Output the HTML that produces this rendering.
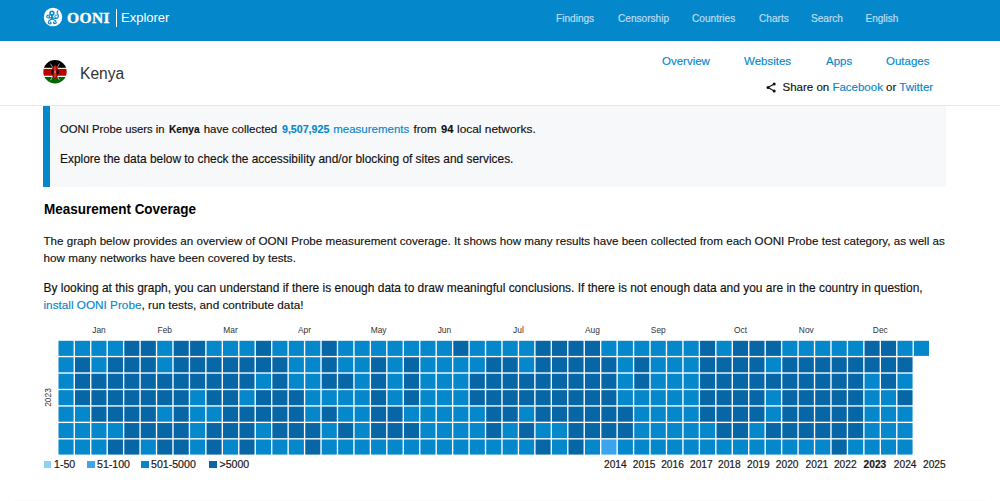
<!DOCTYPE html>
<html><head><meta charset="utf-8">
<style>
*{box-sizing:border-box;margin:0;padding:0}
html,body{width:1000px;height:501px;overflow:hidden;background:#fff;font-family:"Liberation Sans",sans-serif;color:#000}
.abs{position:absolute;white-space:nowrap}
#hdr{position:absolute;left:0;top:0;width:1000px;height:41px;background:#0588cb}
.nav{color:#bcdcf1;font-size:10.1px;top:13px;-webkit-text-stroke-width:0.2px}
#sub{position:absolute;left:0;top:41px;width:1000px;height:65px;background:#fff;border-bottom:1px solid #e6e8eb}
.tab{color:#0588cb;font-size:11.5px;top:55px;-webkit-text-stroke-width:0.15px}
#box{position:absolute;left:43px;top:106px;width:903.3px;height:81px;background:#f7f8fa;border-left:7.5px solid #0588cb}
.p{font-size:11.6px;color:#111;-webkit-text-stroke-width:0.15px}
.lk{color:#0588cb}
b{font-weight:bold}
.leg{font-size:10.6px;top:458px;color:#1a1a1a;-webkit-text-stroke-width:0.2px}
.yr{font-size:10.2px;top:458.8px;color:#1a1a1a;-webkit-text-stroke-width:0.2px}
</style></head><body>
<div id="hdr"></div>
<svg class="abs" style="left:42px;top:6px" width="22" height="23" viewBox="42 6 22 23">
<circle cx="53" cy="17.1" r="9.25" fill="#fff"/>
<g fill="none" stroke="#0588cb" stroke-linecap="round" stroke-linejoin="round">
<circle cx="51.95" cy="13.15" r="1.85" stroke-width="1.7"/>
<path d="M52,15.2 L52,19.2" stroke-width="1.7"/>
<path d="M51.4,17.6 C50.2,17.9 48.2,18.2 47.2,17.4 C46.3,16.6 46.9,15 48.3,15 C49.4,15 49.8,16 49.2,16.6" stroke-width="1.2"/>
<path d="M52.6,17.4 C53.6,18.2 55,18.6 56.4,18.4 C58,18.1 58.6,16.6 58.2,15.2 C57.8,13.9 56.8,13.2 57.2,11.9 C57.4,11.4 57.6,11.2 57.9,11" stroke-width="1.2"/>
<path d="M55.8,18.2 C55,17.6 54.6,16.4 55.2,15.4 C55.6,14.8 56.6,14.7 57,15.4" stroke-width="1"/>
<path d="M51.6,19 C50.4,19.6 48.4,20.6 48.4,22.2 C48.4,23.6 49.8,24.4 50.8,23.6 C51.4,23 51,22 50.4,22" stroke-width="1.2"/>
<path d="M52.4,19 C53.6,19.6 56.2,20.4 56.2,22.2 C56.2,23.6 54.8,24 53.9,23.3 C53.2,22.7 53.6,21.8 54.2,21.8" stroke-width="1.2"/>
</g>
<circle cx="51.9" cy="12.9" r="0.75" fill="#fff"/>
</svg>
<div class="abs" style="left:67px;top:9px;font-family:'Liberation Serif',serif;font-weight:bold;font-size:15.5px;color:#fff;letter-spacing:0.4px;-webkit-text-stroke:0.35px #fff">OONI</div>
<div class="abs" style="left:115.6px;top:9.2px;width:1.2px;height:17.8px;background:#fff"></div>
<div class="abs" style="left:121px;top:10px;font-size:13px;color:#fff">Explorer</div>
<div class="abs nav" style="left:556px">Findings</div>
<div class="abs nav" style="left:618px">Censorship</div>
<div class="abs nav" style="left:692px">Countries</div>
<div class="abs nav" style="left:759px">Charts</div>
<div class="abs nav" style="left:811px">Search</div>
<div class="abs nav" style="left:865.5px;top:12.5px;font-size:10px">English</div>

<div id="sub"></div>
<svg class="abs" style="left:42px;top:59px" width="26" height="26" viewBox="42 59 26 26">
<defs><clipPath id="fc"><circle cx="55" cy="71.8" r="11.7"/></clipPath></defs>
<g clip-path="url(#fc)">
<rect x="42" y="59" width="26" height="9" fill="#000"/>
<rect x="42" y="67.8" width="26" height="1.2" fill="#fff"/>
<rect x="42" y="68.9" width="26" height="7" fill="#bb0000"/>
<rect x="42" y="75.8" width="26" height="1.2" fill="#fff"/>
<rect x="42" y="77" width="26" height="8" fill="#006600"/>
<g stroke="#fff" stroke-width="0.6"><line x1="50.6" y1="63.6" x2="59.4" y2="80.2"/><line x1="59.4" y1="63.6" x2="50.6" y2="80.2"/></g>
<ellipse cx="55" cy="72" rx="3.4" ry="6.8" fill="#bb0000"/>
<ellipse cx="52.4" cy="72" rx="1.4" ry="2.6" fill="#000"/>
<ellipse cx="57.6" cy="72" rx="1.4" ry="2.6" fill="#000"/>
<ellipse cx="55" cy="72" rx="1.5" ry="6.4" fill="#bb0000"/>
<line x1="55" y1="66.5" x2="55" y2="77.5" stroke="#fff" stroke-width="0.4"/>
<ellipse cx="55" cy="72" rx="0.5" ry="0.8" fill="#fff"/>
</g>
</svg>
<div class="abs" style="left:80px;top:65px;font-size:15.6px;color:#333">Kenya</div>
<div class="abs tab" style="left:662px">Overview</div>
<div class="abs tab" style="left:744px">Websites</div>
<div class="abs tab" style="left:826px">Apps</div>
<div class="abs tab" style="left:886px">Outages</div>
<svg class="abs" style="left:764px;top:80px" width="14" height="14" viewBox="764 80 14 14">
<g stroke="#111" stroke-width="1.1"><line x1="768" y1="87.4" x2="774.2" y2="84"/><line x1="768" y1="87.4" x2="774.2" y2="91"/></g>
<circle cx="768" cy="87.4" r="1.5" fill="#111"/><circle cx="774.2" cy="84" r="1.5" fill="#111"/><circle cx="774.2" cy="91" r="1.5" fill="#111"/>
</svg>
<div class="abs" style="left:782.5px;top:81px;font-size:11.5px;color:#111;-webkit-text-stroke-width:0.15px">Share on <span class="lk">Facebook</span> or <span class="lk">Twitter</span></div>

<div id="box"></div>
<div class="abs p " style="left:60px;top:123.2px;font-size:11.5px;transform:scaleX(0.98);transform-origin:0 0">OONI Probe users in</div>
<div class="abs p " style="left:168.6px;top:123.2px;font-size:11.5px;font-weight:bold;transform:scaleX(0.885);transform-origin:0 0">Kenya</div>
<div class="abs p " style="left:203.7px;top:123.2px;font-size:11.5px">have collected</div>
<div class="abs p lk" style="left:282px;top:123.2px;font-size:11.5px;font-weight:bold;transform:scaleX(0.925);transform-origin:0 0">9,507,925</div>
<div class="abs p lk" style="left:333.2px;top:123.2px;font-size:11.5px">measurements</div>
<div class="abs p " style="left:413.5px;top:123.2px;font-size:11.5px">from</div>
<div class="abs p " style="left:440.7px;top:123.2px;font-size:11.5px;font-weight:bold;transform:scaleX(0.97);transform-origin:0 0">94</div>
<div class="abs p " style="left:457px;top:123.2px;font-size:11.5px;transform:scaleX(1.035);transform-origin:0 0">local networks.</div>

<div class="abs p" style="left:60px;top:151.8px;font-size:11.9px">Explore the data below to check the accessibility and/or blocking of sites and services.</div>

<div class="abs" style="left:43.5px;top:200.6px;font-size:14.2px;font-weight:bold;color:#000;transform:scaleX(0.95);transform-origin:0 0">Measurement Coverage</div>
<div class="abs p" style="left:43.5px;top:234px;font-size:11.62px">The graph below provides an overview of OONI Probe measurement coverage. It shows how many results have been collected from each OONI Probe test category, as well as</div>
<div class="abs p" style="left:43.5px;top:251.3px;font-size:11.68px">how many networks have been covered by tests.</div>
<div class="abs p" style="left:43.5px;top:280.8px;font-size:11.96px">By looking at this graph, you can understand if there is enough data to draw meaningful conclusions. If there is not enough data and you are in the country in question,</div>
<div class="abs p" style="left:43.5px;top:297.8px;font-size:11.75px"><span class="lk">install OONI Probe</span>, run tests, and contribute data!</div>

<svg class="abs" style="left:0;top:0" width="1000" height="501" viewBox="0 0 1000 501"><g font-family="Liberation Sans" font-size="8.4" fill="#333"><text x="98.95" y="332.7" text-anchor="middle">Jan</text><text x="164.75" y="332.7" text-anchor="middle">Feb</text><text x="230.55" y="332.7" text-anchor="middle">Mar</text><text x="304.57" y="332.7" text-anchor="middle">Apr</text><text x="378.60" y="332.7" text-anchor="middle">May</text><text x="444.40" y="332.7" text-anchor="middle">Jun</text><text x="518.42" y="332.7" text-anchor="middle">Jul</text><text x="592.45" y="332.7" text-anchor="middle">Aug</text><text x="658.25" y="332.7" text-anchor="middle">Sep</text><text x="740.50" y="332.7" text-anchor="middle">Oct</text><text x="806.30" y="332.7" text-anchor="middle">Nov</text><text x="880.32" y="332.7" text-anchor="middle">Dec</text><text transform="translate(51,397.5) rotate(-90)" text-anchor="middle">2023</text></g><rect x="58.50" y="340.80" width="15.1" height="15.1" fill="#0588cb"/><rect x="74.95" y="340.80" width="15.1" height="15.1" fill="#0588cb"/><rect x="91.40" y="340.80" width="15.1" height="15.1" fill="#0588cb"/><rect x="107.85" y="340.80" width="15.1" height="15.1" fill="#0588cb"/><rect x="124.30" y="340.80" width="15.1" height="15.1" fill="#0767a6"/><rect x="140.75" y="340.80" width="15.1" height="15.1" fill="#0767a6"/><rect x="157.20" y="340.80" width="15.1" height="15.1" fill="#0588cb"/><rect x="173.65" y="340.80" width="15.1" height="15.1" fill="#0767a6"/><rect x="190.10" y="340.80" width="15.1" height="15.1" fill="#0767a6"/><rect x="206.55" y="340.80" width="15.1" height="15.1" fill="#0588cb"/><rect x="223.00" y="340.80" width="15.1" height="15.1" fill="#0588cb"/><rect x="239.45" y="340.80" width="15.1" height="15.1" fill="#0588cb"/><rect x="255.90" y="340.80" width="15.1" height="15.1" fill="#0767a6"/><rect x="272.35" y="340.80" width="15.1" height="15.1" fill="#0588cb"/><rect x="288.80" y="340.80" width="15.1" height="15.1" fill="#0588cb"/><rect x="305.25" y="340.80" width="15.1" height="15.1" fill="#0588cb"/><rect x="321.70" y="340.80" width="15.1" height="15.1" fill="#0767a6"/><rect x="338.15" y="340.80" width="15.1" height="15.1" fill="#0588cb"/><rect x="354.60" y="340.80" width="15.1" height="15.1" fill="#0588cb"/><rect x="371.05" y="340.80" width="15.1" height="15.1" fill="#0588cb"/><rect x="387.50" y="340.80" width="15.1" height="15.1" fill="#0588cb"/><rect x="403.95" y="340.80" width="15.1" height="15.1" fill="#0588cb"/><rect x="420.40" y="340.80" width="15.1" height="15.1" fill="#0588cb"/><rect x="436.85" y="340.80" width="15.1" height="15.1" fill="#0588cb"/><rect x="453.30" y="340.80" width="15.1" height="15.1" fill="#0767a6"/><rect x="469.75" y="340.80" width="15.1" height="15.1" fill="#0588cb"/><rect x="486.20" y="340.80" width="15.1" height="15.1" fill="#0588cb"/><rect x="502.65" y="340.80" width="15.1" height="15.1" fill="#0588cb"/><rect x="519.10" y="340.80" width="15.1" height="15.1" fill="#0588cb"/><rect x="535.55" y="340.80" width="15.1" height="15.1" fill="#0767a6"/><rect x="552.00" y="340.80" width="15.1" height="15.1" fill="#0767a6"/><rect x="568.45" y="340.80" width="15.1" height="15.1" fill="#0767a6"/><rect x="584.90" y="340.80" width="15.1" height="15.1" fill="#0767a6"/><rect x="601.35" y="340.80" width="15.1" height="15.1" fill="#0588cb"/><rect x="617.80" y="340.80" width="15.1" height="15.1" fill="#0588cb"/><rect x="634.25" y="340.80" width="15.1" height="15.1" fill="#0588cb"/><rect x="650.70" y="340.80" width="15.1" height="15.1" fill="#0588cb"/><rect x="667.15" y="340.80" width="15.1" height="15.1" fill="#0588cb"/><rect x="683.60" y="340.80" width="15.1" height="15.1" fill="#0588cb"/><rect x="700.05" y="340.80" width="15.1" height="15.1" fill="#0767a6"/><rect x="716.50" y="340.80" width="15.1" height="15.1" fill="#0588cb"/><rect x="732.95" y="340.80" width="15.1" height="15.1" fill="#0767a6"/><rect x="749.40" y="340.80" width="15.1" height="15.1" fill="#0767a6"/><rect x="765.85" y="340.80" width="15.1" height="15.1" fill="#0767a6"/><rect x="782.30" y="340.80" width="15.1" height="15.1" fill="#0588cb"/><rect x="798.75" y="340.80" width="15.1" height="15.1" fill="#0588cb"/><rect x="815.20" y="340.80" width="15.1" height="15.1" fill="#0588cb"/><rect x="831.65" y="340.80" width="15.1" height="15.1" fill="#0588cb"/><rect x="848.10" y="340.80" width="15.1" height="15.1" fill="#0588cb"/><rect x="864.55" y="340.80" width="15.1" height="15.1" fill="#0767a6"/><rect x="881.00" y="340.80" width="15.1" height="15.1" fill="#0767a6"/><rect x="897.45" y="340.80" width="15.1" height="15.1" fill="#0588cb"/><rect x="913.90" y="340.80" width="15.1" height="15.1" fill="#0588cb"/><rect x="58.50" y="357.25" width="15.1" height="15.1" fill="#0588cb"/><rect x="74.95" y="357.25" width="15.1" height="15.1" fill="#0767a6"/><rect x="91.40" y="357.25" width="15.1" height="15.1" fill="#0588cb"/><rect x="107.85" y="357.25" width="15.1" height="15.1" fill="#0767a6"/><rect x="124.30" y="357.25" width="15.1" height="15.1" fill="#0767a6"/><rect x="140.75" y="357.25" width="15.1" height="15.1" fill="#0767a6"/><rect x="157.20" y="357.25" width="15.1" height="15.1" fill="#0588cb"/><rect x="173.65" y="357.25" width="15.1" height="15.1" fill="#0767a6"/><rect x="190.10" y="357.25" width="15.1" height="15.1" fill="#0767a6"/><rect x="206.55" y="357.25" width="15.1" height="15.1" fill="#0767a6"/><rect x="223.00" y="357.25" width="15.1" height="15.1" fill="#0767a6"/><rect x="239.45" y="357.25" width="15.1" height="15.1" fill="#0767a6"/><rect x="255.90" y="357.25" width="15.1" height="15.1" fill="#0767a6"/><rect x="272.35" y="357.25" width="15.1" height="15.1" fill="#0767a6"/><rect x="288.80" y="357.25" width="15.1" height="15.1" fill="#0588cb"/><rect x="305.25" y="357.25" width="15.1" height="15.1" fill="#0588cb"/><rect x="321.70" y="357.25" width="15.1" height="15.1" fill="#0767a6"/><rect x="338.15" y="357.25" width="15.1" height="15.1" fill="#0588cb"/><rect x="354.60" y="357.25" width="15.1" height="15.1" fill="#0588cb"/><rect x="371.05" y="357.25" width="15.1" height="15.1" fill="#0767a6"/><rect x="387.50" y="357.25" width="15.1" height="15.1" fill="#0588cb"/><rect x="403.95" y="357.25" width="15.1" height="15.1" fill="#0767a6"/><rect x="420.40" y="357.25" width="15.1" height="15.1" fill="#0588cb"/><rect x="436.85" y="357.25" width="15.1" height="15.1" fill="#0588cb"/><rect x="453.30" y="357.25" width="15.1" height="15.1" fill="#0588cb"/><rect x="469.75" y="357.25" width="15.1" height="15.1" fill="#0588cb"/><rect x="486.20" y="357.25" width="15.1" height="15.1" fill="#0767a6"/><rect x="502.65" y="357.25" width="15.1" height="15.1" fill="#0767a6"/><rect x="519.10" y="357.25" width="15.1" height="15.1" fill="#0588cb"/><rect x="535.55" y="357.25" width="15.1" height="15.1" fill="#0767a6"/><rect x="552.00" y="357.25" width="15.1" height="15.1" fill="#0767a6"/><rect x="568.45" y="357.25" width="15.1" height="15.1" fill="#0767a6"/><rect x="584.90" y="357.25" width="15.1" height="15.1" fill="#0767a6"/><rect x="601.35" y="357.25" width="15.1" height="15.1" fill="#0767a6"/><rect x="617.80" y="357.25" width="15.1" height="15.1" fill="#0588cb"/><rect x="634.25" y="357.25" width="15.1" height="15.1" fill="#0767a6"/><rect x="650.70" y="357.25" width="15.1" height="15.1" fill="#0588cb"/><rect x="667.15" y="357.25" width="15.1" height="15.1" fill="#0588cb"/><rect x="683.60" y="357.25" width="15.1" height="15.1" fill="#0588cb"/><rect x="700.05" y="357.25" width="15.1" height="15.1" fill="#0767a6"/><rect x="716.50" y="357.25" width="15.1" height="15.1" fill="#0767a6"/><rect x="732.95" y="357.25" width="15.1" height="15.1" fill="#0767a6"/><rect x="749.40" y="357.25" width="15.1" height="15.1" fill="#0767a6"/><rect x="765.85" y="357.25" width="15.1" height="15.1" fill="#0588cb"/><rect x="782.30" y="357.25" width="15.1" height="15.1" fill="#0767a6"/><rect x="798.75" y="357.25" width="15.1" height="15.1" fill="#0767a6"/><rect x="815.20" y="357.25" width="15.1" height="15.1" fill="#0767a6"/><rect x="831.65" y="357.25" width="15.1" height="15.1" fill="#0767a6"/><rect x="848.10" y="357.25" width="15.1" height="15.1" fill="#0767a6"/><rect x="864.55" y="357.25" width="15.1" height="15.1" fill="#0767a6"/><rect x="881.00" y="357.25" width="15.1" height="15.1" fill="#0767a6"/><rect x="897.45" y="357.25" width="15.1" height="15.1" fill="#0767a6"/><rect x="58.50" y="373.70" width="15.1" height="15.1" fill="#0588cb"/><rect x="74.95" y="373.70" width="15.1" height="15.1" fill="#0767a6"/><rect x="91.40" y="373.70" width="15.1" height="15.1" fill="#0767a6"/><rect x="107.85" y="373.70" width="15.1" height="15.1" fill="#0767a6"/><rect x="124.30" y="373.70" width="15.1" height="15.1" fill="#0767a6"/><rect x="140.75" y="373.70" width="15.1" height="15.1" fill="#0767a6"/><rect x="157.20" y="373.70" width="15.1" height="15.1" fill="#0767a6"/><rect x="173.65" y="373.70" width="15.1" height="15.1" fill="#0767a6"/><rect x="190.10" y="373.70" width="15.1" height="15.1" fill="#0767a6"/><rect x="206.55" y="373.70" width="15.1" height="15.1" fill="#0767a6"/><rect x="223.00" y="373.70" width="15.1" height="15.1" fill="#0767a6"/><rect x="239.45" y="373.70" width="15.1" height="15.1" fill="#0767a6"/><rect x="255.90" y="373.70" width="15.1" height="15.1" fill="#0588cb"/><rect x="272.35" y="373.70" width="15.1" height="15.1" fill="#0767a6"/><rect x="288.80" y="373.70" width="15.1" height="15.1" fill="#0588cb"/><rect x="305.25" y="373.70" width="15.1" height="15.1" fill="#0588cb"/><rect x="321.70" y="373.70" width="15.1" height="15.1" fill="#0767a6"/><rect x="338.15" y="373.70" width="15.1" height="15.1" fill="#0767a6"/><rect x="354.60" y="373.70" width="15.1" height="15.1" fill="#0588cb"/><rect x="371.05" y="373.70" width="15.1" height="15.1" fill="#0767a6"/><rect x="387.50" y="373.70" width="15.1" height="15.1" fill="#0588cb"/><rect x="403.95" y="373.70" width="15.1" height="15.1" fill="#0767a6"/><rect x="420.40" y="373.70" width="15.1" height="15.1" fill="#0588cb"/><rect x="436.85" y="373.70" width="15.1" height="15.1" fill="#0588cb"/><rect x="453.30" y="373.70" width="15.1" height="15.1" fill="#0588cb"/><rect x="469.75" y="373.70" width="15.1" height="15.1" fill="#0767a6"/><rect x="486.20" y="373.70" width="15.1" height="15.1" fill="#0767a6"/><rect x="502.65" y="373.70" width="15.1" height="15.1" fill="#0767a6"/><rect x="519.10" y="373.70" width="15.1" height="15.1" fill="#0767a6"/><rect x="535.55" y="373.70" width="15.1" height="15.1" fill="#0767a6"/><rect x="552.00" y="373.70" width="15.1" height="15.1" fill="#0767a6"/><rect x="568.45" y="373.70" width="15.1" height="15.1" fill="#0767a6"/><rect x="584.90" y="373.70" width="15.1" height="15.1" fill="#0767a6"/><rect x="601.35" y="373.70" width="15.1" height="15.1" fill="#0767a6"/><rect x="617.80" y="373.70" width="15.1" height="15.1" fill="#0588cb"/><rect x="634.25" y="373.70" width="15.1" height="15.1" fill="#0767a6"/><rect x="650.70" y="373.70" width="15.1" height="15.1" fill="#0588cb"/><rect x="667.15" y="373.70" width="15.1" height="15.1" fill="#0588cb"/><rect x="683.60" y="373.70" width="15.1" height="15.1" fill="#0588cb"/><rect x="700.05" y="373.70" width="15.1" height="15.1" fill="#0767a6"/><rect x="716.50" y="373.70" width="15.1" height="15.1" fill="#0767a6"/><rect x="732.95" y="373.70" width="15.1" height="15.1" fill="#0767a6"/><rect x="749.40" y="373.70" width="15.1" height="15.1" fill="#0767a6"/><rect x="765.85" y="373.70" width="15.1" height="15.1" fill="#0767a6"/><rect x="782.30" y="373.70" width="15.1" height="15.1" fill="#0767a6"/><rect x="798.75" y="373.70" width="15.1" height="15.1" fill="#0767a6"/><rect x="815.20" y="373.70" width="15.1" height="15.1" fill="#0767a6"/><rect x="831.65" y="373.70" width="15.1" height="15.1" fill="#0767a6"/><rect x="848.10" y="373.70" width="15.1" height="15.1" fill="#0767a6"/><rect x="864.55" y="373.70" width="15.1" height="15.1" fill="#0588cb"/><rect x="881.00" y="373.70" width="15.1" height="15.1" fill="#0767a6"/><rect x="897.45" y="373.70" width="15.1" height="15.1" fill="#0588cb"/><rect x="58.50" y="390.15" width="15.1" height="15.1" fill="#0588cb"/><rect x="74.95" y="390.15" width="15.1" height="15.1" fill="#0767a6"/><rect x="91.40" y="390.15" width="15.1" height="15.1" fill="#0767a6"/><rect x="107.85" y="390.15" width="15.1" height="15.1" fill="#0767a6"/><rect x="124.30" y="390.15" width="15.1" height="15.1" fill="#0767a6"/><rect x="140.75" y="390.15" width="15.1" height="15.1" fill="#0767a6"/><rect x="157.20" y="390.15" width="15.1" height="15.1" fill="#0767a6"/><rect x="173.65" y="390.15" width="15.1" height="15.1" fill="#0767a6"/><rect x="190.10" y="390.15" width="15.1" height="15.1" fill="#0588cb"/><rect x="206.55" y="390.15" width="15.1" height="15.1" fill="#0767a6"/><rect x="223.00" y="390.15" width="15.1" height="15.1" fill="#0767a6"/><rect x="239.45" y="390.15" width="15.1" height="15.1" fill="#0588cb"/><rect x="255.90" y="390.15" width="15.1" height="15.1" fill="#0767a6"/><rect x="272.35" y="390.15" width="15.1" height="15.1" fill="#0767a6"/><rect x="288.80" y="390.15" width="15.1" height="15.1" fill="#0767a6"/><rect x="305.25" y="390.15" width="15.1" height="15.1" fill="#0588cb"/><rect x="321.70" y="390.15" width="15.1" height="15.1" fill="#0588cb"/><rect x="338.15" y="390.15" width="15.1" height="15.1" fill="#0588cb"/><rect x="354.60" y="390.15" width="15.1" height="15.1" fill="#0588cb"/><rect x="371.05" y="390.15" width="15.1" height="15.1" fill="#0767a6"/><rect x="387.50" y="390.15" width="15.1" height="15.1" fill="#0588cb"/><rect x="403.95" y="390.15" width="15.1" height="15.1" fill="#0767a6"/><rect x="420.40" y="390.15" width="15.1" height="15.1" fill="#0588cb"/><rect x="436.85" y="390.15" width="15.1" height="15.1" fill="#0588cb"/><rect x="453.30" y="390.15" width="15.1" height="15.1" fill="#0588cb"/><rect x="469.75" y="390.15" width="15.1" height="15.1" fill="#0767a6"/><rect x="486.20" y="390.15" width="15.1" height="15.1" fill="#0767a6"/><rect x="502.65" y="390.15" width="15.1" height="15.1" fill="#0767a6"/><rect x="519.10" y="390.15" width="15.1" height="15.1" fill="#0767a6"/><rect x="535.55" y="390.15" width="15.1" height="15.1" fill="#0767a6"/><rect x="552.00" y="390.15" width="15.1" height="15.1" fill="#0767a6"/><rect x="568.45" y="390.15" width="15.1" height="15.1" fill="#0767a6"/><rect x="584.90" y="390.15" width="15.1" height="15.1" fill="#0767a6"/><rect x="601.35" y="390.15" width="15.1" height="15.1" fill="#0767a6"/><rect x="617.80" y="390.15" width="15.1" height="15.1" fill="#0588cb"/><rect x="634.25" y="390.15" width="15.1" height="15.1" fill="#0588cb"/><rect x="650.70" y="390.15" width="15.1" height="15.1" fill="#0588cb"/><rect x="667.15" y="390.15" width="15.1" height="15.1" fill="#0588cb"/><rect x="683.60" y="390.15" width="15.1" height="15.1" fill="#0588cb"/><rect x="700.05" y="390.15" width="15.1" height="15.1" fill="#0767a6"/><rect x="716.50" y="390.15" width="15.1" height="15.1" fill="#0767a6"/><rect x="732.95" y="390.15" width="15.1" height="15.1" fill="#0767a6"/><rect x="749.40" y="390.15" width="15.1" height="15.1" fill="#0767a6"/><rect x="765.85" y="390.15" width="15.1" height="15.1" fill="#0588cb"/><rect x="782.30" y="390.15" width="15.1" height="15.1" fill="#0767a6"/><rect x="798.75" y="390.15" width="15.1" height="15.1" fill="#0767a6"/><rect x="815.20" y="390.15" width="15.1" height="15.1" fill="#0767a6"/><rect x="831.65" y="390.15" width="15.1" height="15.1" fill="#0767a6"/><rect x="848.10" y="390.15" width="15.1" height="15.1" fill="#0767a6"/><rect x="864.55" y="390.15" width="15.1" height="15.1" fill="#0588cb"/><rect x="881.00" y="390.15" width="15.1" height="15.1" fill="#0588cb"/><rect x="897.45" y="390.15" width="15.1" height="15.1" fill="#0767a6"/><rect x="58.50" y="406.60" width="15.1" height="15.1" fill="#0588cb"/><rect x="74.95" y="406.60" width="15.1" height="15.1" fill="#0588cb"/><rect x="91.40" y="406.60" width="15.1" height="15.1" fill="#0767a6"/><rect x="107.85" y="406.60" width="15.1" height="15.1" fill="#0767a6"/><rect x="124.30" y="406.60" width="15.1" height="15.1" fill="#0767a6"/><rect x="140.75" y="406.60" width="15.1" height="15.1" fill="#0767a6"/><rect x="157.20" y="406.60" width="15.1" height="15.1" fill="#0588cb"/><rect x="173.65" y="406.60" width="15.1" height="15.1" fill="#0767a6"/><rect x="190.10" y="406.60" width="15.1" height="15.1" fill="#0588cb"/><rect x="206.55" y="406.60" width="15.1" height="15.1" fill="#0588cb"/><rect x="223.00" y="406.60" width="15.1" height="15.1" fill="#0767a6"/><rect x="239.45" y="406.60" width="15.1" height="15.1" fill="#0767a6"/><rect x="255.90" y="406.60" width="15.1" height="15.1" fill="#0767a6"/><rect x="272.35" y="406.60" width="15.1" height="15.1" fill="#0767a6"/><rect x="288.80" y="406.60" width="15.1" height="15.1" fill="#0767a6"/><rect x="305.25" y="406.60" width="15.1" height="15.1" fill="#0588cb"/><rect x="321.70" y="406.60" width="15.1" height="15.1" fill="#0767a6"/><rect x="338.15" y="406.60" width="15.1" height="15.1" fill="#0588cb"/><rect x="354.60" y="406.60" width="15.1" height="15.1" fill="#0588cb"/><rect x="371.05" y="406.60" width="15.1" height="15.1" fill="#0767a6"/><rect x="387.50" y="406.60" width="15.1" height="15.1" fill="#0767a6"/><rect x="403.95" y="406.60" width="15.1" height="15.1" fill="#0588cb"/><rect x="420.40" y="406.60" width="15.1" height="15.1" fill="#0588cb"/><rect x="436.85" y="406.60" width="15.1" height="15.1" fill="#0588cb"/><rect x="453.30" y="406.60" width="15.1" height="15.1" fill="#0588cb"/><rect x="469.75" y="406.60" width="15.1" height="15.1" fill="#0588cb"/><rect x="486.20" y="406.60" width="15.1" height="15.1" fill="#0767a6"/><rect x="502.65" y="406.60" width="15.1" height="15.1" fill="#0767a6"/><rect x="519.10" y="406.60" width="15.1" height="15.1" fill="#0588cb"/><rect x="535.55" y="406.60" width="15.1" height="15.1" fill="#0767a6"/><rect x="552.00" y="406.60" width="15.1" height="15.1" fill="#0767a6"/><rect x="568.45" y="406.60" width="15.1" height="15.1" fill="#0767a6"/><rect x="584.90" y="406.60" width="15.1" height="15.1" fill="#0767a6"/><rect x="601.35" y="406.60" width="15.1" height="15.1" fill="#0767a6"/><rect x="617.80" y="406.60" width="15.1" height="15.1" fill="#0767a6"/><rect x="634.25" y="406.60" width="15.1" height="15.1" fill="#0588cb"/><rect x="650.70" y="406.60" width="15.1" height="15.1" fill="#0588cb"/><rect x="667.15" y="406.60" width="15.1" height="15.1" fill="#0588cb"/><rect x="683.60" y="406.60" width="15.1" height="15.1" fill="#0588cb"/><rect x="700.05" y="406.60" width="15.1" height="15.1" fill="#0767a6"/><rect x="716.50" y="406.60" width="15.1" height="15.1" fill="#0767a6"/><rect x="732.95" y="406.60" width="15.1" height="15.1" fill="#0767a6"/><rect x="749.40" y="406.60" width="15.1" height="15.1" fill="#0767a6"/><rect x="765.85" y="406.60" width="15.1" height="15.1" fill="#0588cb"/><rect x="782.30" y="406.60" width="15.1" height="15.1" fill="#0767a6"/><rect x="798.75" y="406.60" width="15.1" height="15.1" fill="#0767a6"/><rect x="815.20" y="406.60" width="15.1" height="15.1" fill="#0767a6"/><rect x="831.65" y="406.60" width="15.1" height="15.1" fill="#0767a6"/><rect x="848.10" y="406.60" width="15.1" height="15.1" fill="#0767a6"/><rect x="864.55" y="406.60" width="15.1" height="15.1" fill="#0588cb"/><rect x="881.00" y="406.60" width="15.1" height="15.1" fill="#0588cb"/><rect x="897.45" y="406.60" width="15.1" height="15.1" fill="#0588cb"/><rect x="58.50" y="423.05" width="15.1" height="15.1" fill="#0588cb"/><rect x="74.95" y="423.05" width="15.1" height="15.1" fill="#0588cb"/><rect x="91.40" y="423.05" width="15.1" height="15.1" fill="#0588cb"/><rect x="107.85" y="423.05" width="15.1" height="15.1" fill="#0588cb"/><rect x="124.30" y="423.05" width="15.1" height="15.1" fill="#0767a6"/><rect x="140.75" y="423.05" width="15.1" height="15.1" fill="#0767a6"/><rect x="157.20" y="423.05" width="15.1" height="15.1" fill="#0767a6"/><rect x="173.65" y="423.05" width="15.1" height="15.1" fill="#0767a6"/><rect x="190.10" y="423.05" width="15.1" height="15.1" fill="#0588cb"/><rect x="206.55" y="423.05" width="15.1" height="15.1" fill="#0767a6"/><rect x="223.00" y="423.05" width="15.1" height="15.1" fill="#0767a6"/><rect x="239.45" y="423.05" width="15.1" height="15.1" fill="#0767a6"/><rect x="255.90" y="423.05" width="15.1" height="15.1" fill="#0588cb"/><rect x="272.35" y="423.05" width="15.1" height="15.1" fill="#0767a6"/><rect x="288.80" y="423.05" width="15.1" height="15.1" fill="#0767a6"/><rect x="305.25" y="423.05" width="15.1" height="15.1" fill="#0767a6"/><rect x="321.70" y="423.05" width="15.1" height="15.1" fill="#0588cb"/><rect x="338.15" y="423.05" width="15.1" height="15.1" fill="#0767a6"/><rect x="354.60" y="423.05" width="15.1" height="15.1" fill="#0588cb"/><rect x="371.05" y="423.05" width="15.1" height="15.1" fill="#0767a6"/><rect x="387.50" y="423.05" width="15.1" height="15.1" fill="#0767a6"/><rect x="403.95" y="423.05" width="15.1" height="15.1" fill="#0767a6"/><rect x="420.40" y="423.05" width="15.1" height="15.1" fill="#0588cb"/><rect x="436.85" y="423.05" width="15.1" height="15.1" fill="#0588cb"/><rect x="453.30" y="423.05" width="15.1" height="15.1" fill="#0588cb"/><rect x="469.75" y="423.05" width="15.1" height="15.1" fill="#0588cb"/><rect x="486.20" y="423.05" width="15.1" height="15.1" fill="#0767a6"/><rect x="502.65" y="423.05" width="15.1" height="15.1" fill="#0588cb"/><rect x="519.10" y="423.05" width="15.1" height="15.1" fill="#0767a6"/><rect x="535.55" y="423.05" width="15.1" height="15.1" fill="#0588cb"/><rect x="552.00" y="423.05" width="15.1" height="15.1" fill="#0588cb"/><rect x="568.45" y="423.05" width="15.1" height="15.1" fill="#0767a6"/><rect x="584.90" y="423.05" width="15.1" height="15.1" fill="#0767a6"/><rect x="601.35" y="423.05" width="15.1" height="15.1" fill="#0767a6"/><rect x="617.80" y="423.05" width="15.1" height="15.1" fill="#0767a6"/><rect x="634.25" y="423.05" width="15.1" height="15.1" fill="#0588cb"/><rect x="650.70" y="423.05" width="15.1" height="15.1" fill="#0588cb"/><rect x="667.15" y="423.05" width="15.1" height="15.1" fill="#0588cb"/><rect x="683.60" y="423.05" width="15.1" height="15.1" fill="#0588cb"/><rect x="700.05" y="423.05" width="15.1" height="15.1" fill="#0588cb"/><rect x="716.50" y="423.05" width="15.1" height="15.1" fill="#0767a6"/><rect x="732.95" y="423.05" width="15.1" height="15.1" fill="#0767a6"/><rect x="749.40" y="423.05" width="15.1" height="15.1" fill="#0588cb"/><rect x="765.85" y="423.05" width="15.1" height="15.1" fill="#0767a6"/><rect x="782.30" y="423.05" width="15.1" height="15.1" fill="#0767a6"/><rect x="798.75" y="423.05" width="15.1" height="15.1" fill="#0767a6"/><rect x="815.20" y="423.05" width="15.1" height="15.1" fill="#0767a6"/><rect x="831.65" y="423.05" width="15.1" height="15.1" fill="#0767a6"/><rect x="848.10" y="423.05" width="15.1" height="15.1" fill="#0767a6"/><rect x="864.55" y="423.05" width="15.1" height="15.1" fill="#0588cb"/><rect x="881.00" y="423.05" width="15.1" height="15.1" fill="#0588cb"/><rect x="897.45" y="423.05" width="15.1" height="15.1" fill="#0588cb"/><rect x="58.50" y="439.50" width="15.1" height="15.1" fill="#0588cb"/><rect x="74.95" y="439.50" width="15.1" height="15.1" fill="#0588cb"/><rect x="91.40" y="439.50" width="15.1" height="15.1" fill="#0588cb"/><rect x="107.85" y="439.50" width="15.1" height="15.1" fill="#0767a6"/><rect x="124.30" y="439.50" width="15.1" height="15.1" fill="#0767a6"/><rect x="140.75" y="439.50" width="15.1" height="15.1" fill="#0588cb"/><rect x="157.20" y="439.50" width="15.1" height="15.1" fill="#0767a6"/><rect x="173.65" y="439.50" width="15.1" height="15.1" fill="#0767a6"/><rect x="190.10" y="439.50" width="15.1" height="15.1" fill="#0588cb"/><rect x="206.55" y="439.50" width="15.1" height="15.1" fill="#0767a6"/><rect x="223.00" y="439.50" width="15.1" height="15.1" fill="#0588cb"/><rect x="239.45" y="439.50" width="15.1" height="15.1" fill="#0767a6"/><rect x="255.90" y="439.50" width="15.1" height="15.1" fill="#0588cb"/><rect x="272.35" y="439.50" width="15.1" height="15.1" fill="#0588cb"/><rect x="288.80" y="439.50" width="15.1" height="15.1" fill="#0588cb"/><rect x="305.25" y="439.50" width="15.1" height="15.1" fill="#0767a6"/><rect x="321.70" y="439.50" width="15.1" height="15.1" fill="#0588cb"/><rect x="338.15" y="439.50" width="15.1" height="15.1" fill="#0588cb"/><rect x="354.60" y="439.50" width="15.1" height="15.1" fill="#0588cb"/><rect x="371.05" y="439.50" width="15.1" height="15.1" fill="#0588cb"/><rect x="387.50" y="439.50" width="15.1" height="15.1" fill="#0588cb"/><rect x="403.95" y="439.50" width="15.1" height="15.1" fill="#0588cb"/><rect x="420.40" y="439.50" width="15.1" height="15.1" fill="#0588cb"/><rect x="436.85" y="439.50" width="15.1" height="15.1" fill="#0588cb"/><rect x="453.30" y="439.50" width="15.1" height="15.1" fill="#0588cb"/><rect x="469.75" y="439.50" width="15.1" height="15.1" fill="#0588cb"/><rect x="486.20" y="439.50" width="15.1" height="15.1" fill="#0588cb"/><rect x="502.65" y="439.50" width="15.1" height="15.1" fill="#0588cb"/><rect x="519.10" y="439.50" width="15.1" height="15.1" fill="#0588cb"/><rect x="535.55" y="439.50" width="15.1" height="15.1" fill="#0767a6"/><rect x="552.00" y="439.50" width="15.1" height="15.1" fill="#0588cb"/><rect x="568.45" y="439.50" width="15.1" height="15.1" fill="#0767a6"/><rect x="584.90" y="439.50" width="15.1" height="15.1" fill="#0588cb"/><rect x="601.35" y="439.50" width="15.1" height="15.1" fill="#3ba4ec"/><rect x="617.80" y="439.50" width="15.1" height="15.1" fill="#0588cb"/><rect x="634.25" y="439.50" width="15.1" height="15.1" fill="#0588cb"/><rect x="650.70" y="439.50" width="15.1" height="15.1" fill="#0588cb"/><rect x="667.15" y="439.50" width="15.1" height="15.1" fill="#0588cb"/><rect x="683.60" y="439.50" width="15.1" height="15.1" fill="#0588cb"/><rect x="700.05" y="439.50" width="15.1" height="15.1" fill="#0588cb"/><rect x="716.50" y="439.50" width="15.1" height="15.1" fill="#0588cb"/><rect x="732.95" y="439.50" width="15.1" height="15.1" fill="#0588cb"/><rect x="749.40" y="439.50" width="15.1" height="15.1" fill="#0588cb"/><rect x="765.85" y="439.50" width="15.1" height="15.1" fill="#0588cb"/><rect x="782.30" y="439.50" width="15.1" height="15.1" fill="#0588cb"/><rect x="798.75" y="439.50" width="15.1" height="15.1" fill="#0588cb"/><rect x="815.20" y="439.50" width="15.1" height="15.1" fill="#0588cb"/><rect x="831.65" y="439.50" width="15.1" height="15.1" fill="#0767a6"/><rect x="848.10" y="439.50" width="15.1" height="15.1" fill="#0588cb"/><rect x="864.55" y="439.50" width="15.1" height="15.1" fill="#0588cb"/><rect x="881.00" y="439.50" width="15.1" height="15.1" fill="#0588cb"/><rect x="897.45" y="439.50" width="15.1" height="15.1" fill="#0588cb"/></svg>
<div class="abs" style="left:15px;top:500px;width:970px;height:1px;background:#f9f9fa"></div>
<div class="abs" style="left:43.5px;top:460.5px;width:7.5px;height:7.5px;background:#8fd1f5"></div>
<div class="abs leg" style="left:54px">1-50</div>
<div class="abs" style="left:87px;top:460.5px;width:7.8px;height:7.5px;background:#3fa5ea"></div>
<div class="abs leg" style="left:97px">51-100</div>
<div class="abs" style="left:141px;top:460.5px;width:8px;height:7.5px;background:#0588cb"></div>
<div class="abs leg" style="left:151px">501-5000</div>
<div class="abs" style="left:209px;top:460.5px;width:8px;height:7.5px;background:#0767a6"></div>
<div class="abs leg" style="left:219.5px">&gt;5000</div>
<div class="abs yr" style="left:604px">2014</div>
<div class="abs yr" style="left:632.8px">2015</div>
<div class="abs yr" style="left:661.2px">2016</div>
<div class="abs yr" style="left:690px">2017</div>
<div class="abs yr" style="left:718px">2018</div>
<div class="abs yr" style="left:747px">2019</div>
<div class="abs yr" style="left:775.8px">2020</div>
<div class="abs yr" style="left:805.6px">2021</div>
<div class="abs yr" style="left:833.9px">2022</div>
<div class="abs yr" style="left:863.6px;font-weight:bold">2023</div>
<div class="abs yr" style="left:893.8px">2024</div>
<div class="abs yr" style="left:923px">2025</div>

</body></html>
